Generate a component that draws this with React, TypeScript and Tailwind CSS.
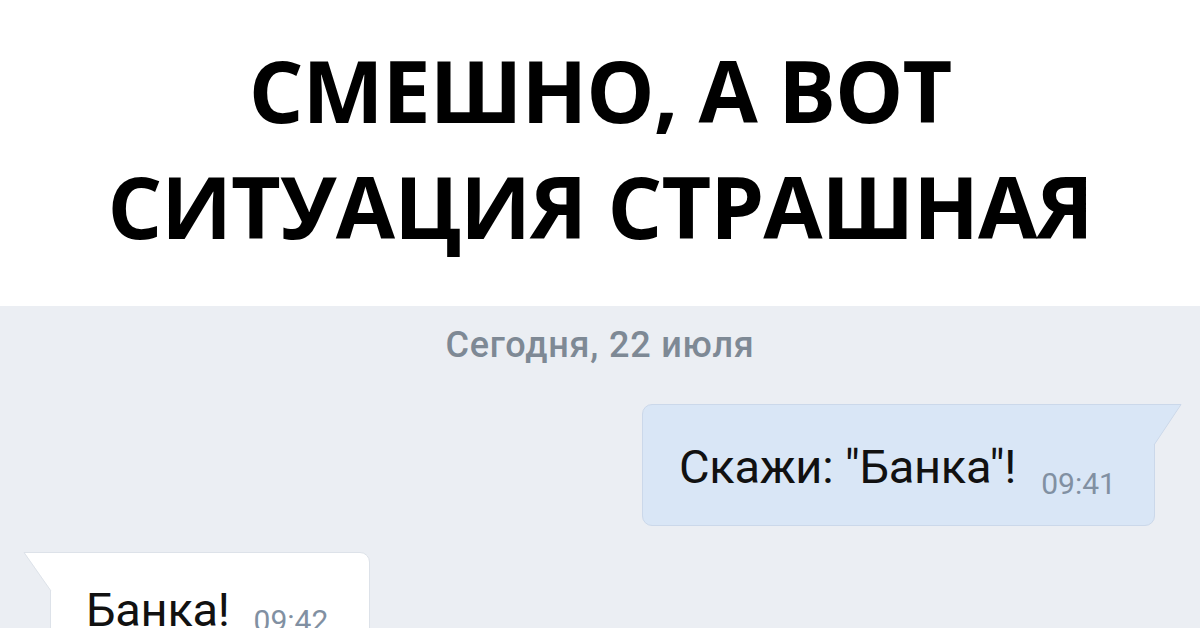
export default function App() {
  return (
    <div className="w-[1200px] h-[628px] overflow-hidden flex flex-col bg-white">
      <div className="h-[306px] shrink-0 flex flex-col items-center pt-[32px] bg-white">
        <h1 className="font-['Open_Sans',sans-serif] font-bold text-black text-[86px] leading-[116px] text-center uppercase tracking-[-1px]">
          <div>Смешно, а вот</div>
          <div>ситуация страшная</div>
        </h1>
      </div>

      <div className="flex-1 bg-[#ebeef3] font-['Roboto',sans-serif]">
        <div className="text-center text-[#7e8995] text-[36px] font-medium leading-none pt-[21px] tracking-[0.8px]">
          Сегодня, 22 июля
        </div>

        <div className="flex justify-end pr-[45px] mt-[41px]">
          <div className="relative">
            <div className="w-[513px] h-[122px] bg-[#d9e6f6] border border-[#cbd8ea] rounded-[10px] rounded-tr-none flex items-end pl-[36px] pb-[35px]">
              <span className="text-[47px] leading-none text-[#111] tracking-[-0.3px]">Скажи: "Банка"!</span>
              <span className="text-[30px] leading-none text-[#8190a2] ml-[25px] mb-[-9px]">09:41</span>
            </div>
            <svg className="absolute top-0 right-[-28px]" width="30" height="42" viewBox="0 0 30 42">
              <path d="M0 0 H28 L1 41 H0 Z" fill="#d9e6f6" />
              <path d="M0 0.5 H28 L1 41" fill="none" stroke="#cbd8ea" strokeWidth="1" />
            </svg>
          </div>
        </div>

        <div className="flex pl-[50px] mt-[26px]">
          <div className="relative">
            <svg className="absolute top-0 left-[-28px]" width="30" height="40" viewBox="0 0 30 40">
              <path d="M30 0 H2 L29 39 H30 Z" fill="#ffffff" />
              <path d="M30 0.5 H2 L29 39" fill="none" stroke="#dde2e9" strokeWidth="1" />
            </svg>
            <div className="w-[320px] h-[122px] bg-white border border-[#dde2e9] rounded-[10px] rounded-tl-none flex items-start pl-[35px] pt-[33px]">
              <span className="text-[47px] leading-none text-[#111] tracking-[-0.3px]">Банка!</span>
              <span className="text-[30px] leading-none text-[#8190a2] ml-[24px] mt-[20px]">09:42</span>
            </div>
          </div>
        </div>
      </div>
    </div>
  );
}
